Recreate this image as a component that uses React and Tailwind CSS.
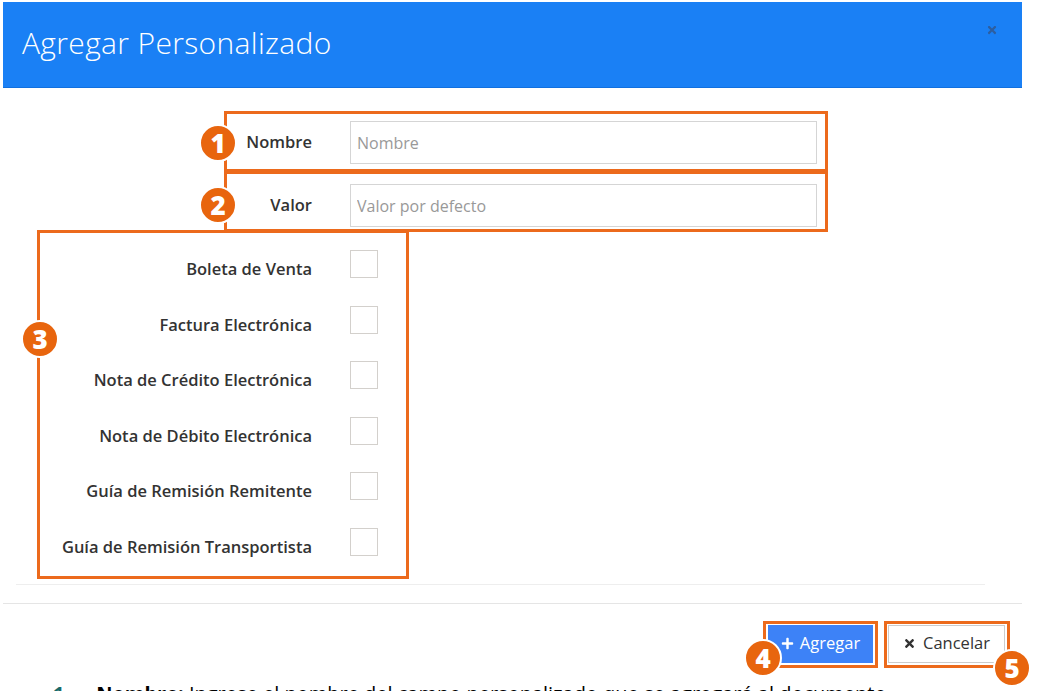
import React from "react"
import { FaPlus, FaTimes } from "react-icons/fa"

const docTypes = [
  "Boleta de Venta",
  "Factura Electrónica",
  "Nota de Crédito Electrónica",
  "Nota de Débito Electrónica",
  "Guía de Remisión Remitente",
  "Guía de Remisión Transportista",
]

// numbered orange marker used by the annotations
const Marker = ({ n, className }) => (
  <div
    className={`absolute w-[38px] h-[38px] rounded-full bg-[#e8650e] border-2 border-white flex items-center justify-center text-white text-[26px] font-extrabold leading-none ${className}`}
  >
    {n}
  </div>
)

const App = () => {
  return (
    <div className="relative w-[1038px] h-[691px] overflow-hidden bg-white font-['Open_Sans',sans-serif]">
      <div className="ml-[3px] w-[1019px] mt-[2px]">
        {/* Header */}
        <div className="h-[86px] bg-[#1a80f5] border-b border-[#1170df] flex items-start justify-between pl-[19px] pr-[24px]">
          <h1 className="text-white text-[30px] font-light mt-[18px] tracking-[0.35px]">Agregar Personalizado</h1>
          <FaTimes className="text-[#2d5ea0] text-[12px] mt-[22px]" />
        </div>

        {/* Body */}
        <div className="px-[13px] pt-[33px]">
          <div className="flex items-center">
            <label className="w-[296px] text-right text-[16.5px] font-semibold text-[#333]">Nombre</label>
            <input
              className="ml-[38px] w-[467px] h-[43px] border border-[#d5d5d5] px-[6px] text-[16px] text-[#555] placeholder-[#999] outline-none"
              placeholder="Nombre"
            />
          </div>
          <div className="flex items-center mt-[20px]">
            <label className="w-[296px] text-right text-[16.5px] font-semibold text-[#333]">Valor</label>
            <input
              className="ml-[38px] w-[467px] h-[43px] border border-[#d5d5d5] px-[6px] text-[16px] text-[#555] placeholder-[#999] outline-none"
              placeholder="Valor por defecto"
            />
          </div>

          <div className="mt-[23px] flex flex-col gap-[27.5px]">
            {docTypes.map((t) => (
              <div key={t} className="flex items-start h-[28px]">
                <span className="w-[296px] text-right text-[16.5px] font-semibold text-[#333] pt-[5px] leading-[28px]">{t}</span>
                <span className="ml-[38px] w-[28px] h-[28px] border border-[#d3d0cc] bg-white"></span>
              </div>
            ))}
          </div>

          <div className="mt-[28px] border-t border-[#eeeeee] w-[969px]"></div>
        </div>

        {/* Footer */}
        <div className="mt-[18px] border-t border-[#e5e5e5] flex justify-end gap-[15px] pr-[17px] pt-[21px] h-[78px]">
          <button className="w-[105px] h-[38px] bg-[#3d82f7] text-white text-[16.5px] flex items-center justify-center gap-[6px]">
            <FaPlus className="text-[13px]" />
            <span>Agregar</span>
          </button>
          <button className="w-[117px] h-[38px] bg-white border border-[#ccc] text-[#333] text-[16.5px] flex items-center justify-center gap-[7px]">
            <FaTimes className="text-[13px]" />
            <span>Cancelar</span>
          </button>
        </div>
      </div>

      {/* Explanation text underneath, cut off by the frame */}
      <div className="absolute left-[53px] top-[684px] flex items-baseline gap-[26px] text-[20px] leading-none text-black whitespace-nowrap">
        <span className="text-[#1a6a6a] font-bold">1.</span>
        <span><b>Nombre:</b> Ingrese el nombre del campo personalizado que se agregará al documento.</span>
      </div>

      {/* Annotation boxes */}
      <div className="absolute left-[224px] top-[111px] w-[604px] h-[61px] border-[3px] border-[#ec6a1c]"></div>
      <div className="absolute left-[224px] top-[171px] w-[604px] h-[61px] border-[3px] border-[#ec6a1c]"></div>
      <div className="absolute left-[37px] top-[230px] w-[372px] h-[349px] border-[3px] border-[#ec6a1c]"></div>
      <div className="absolute left-[763px] top-[621px] w-[115px] h-[47px] border-[3px] border-[#ec6a1c]"></div>
      <div className="absolute left-[884px] top-[621px] w-[126px] h-[47px] border-[3px] border-[#ec6a1c]"></div>

      <Marker n="1" className="left-[199px] top-[124px]" />
      <Marker n="2" className="left-[199px] top-[186px]" />
      <Marker n="3" className="left-[21px] top-[320px]" />
      <Marker n="4" className="left-[744px] top-[639px]" />
      <Marker n="5" className="left-[993px] top-[649px]" />
    </div>
  )
}

export default App
